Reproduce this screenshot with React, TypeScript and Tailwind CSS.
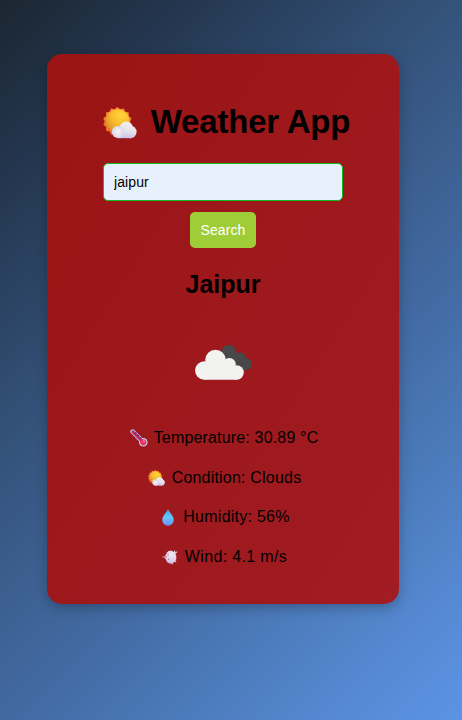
import React from 'react';

const RAYS = Array.from({ length: 28 }, (_, i) => {
  const r = i % 2 === 0 ? 14.5 : 12.6;
  const a = (i * Math.PI) / 14 - Math.PI / 2;
  return `${(14.4 + r * Math.cos(a)).toFixed(2)},${(14.6 + r * Math.sin(a)).toFixed(2)}`;
}).join(' ');

function SunCloud({ className, id }: { className: string; id: string }) {
  return (
    <svg className={className} viewBox="0 0 34 32">
      <defs>
        <radialGradient id={id + 's'} cx="0.65" cy="0.25" r="0.8">
          <stop offset="0" stopColor="#ffd43a" />
          <stop offset="0.5" stopColor="#f9bd2d" />
          <stop offset="1" stopColor="#d9922a" />
        </radialGradient>
        <linearGradient id={id + 'r'} x1="0" y1="0" x2="0" y2="1">
          <stop offset="0" stopColor="#ff922d" />
          <stop offset="1" stopColor="#ed6426" />
        </linearGradient>
        <linearGradient id={id + 'c'} gradientUnits="userSpaceOnUse" x1="22" y1="14" x2="20" y2="31">
          <stop offset="0" stopColor="#f0eef1" />
          <stop offset="0.6" stopColor="#e4e1ea" />
          <stop offset="1" stopColor="#c9bfe8" />
        </linearGradient>
        <radialGradient id={id + 'l'} cx="0.5" cy="0.5" r="0.5">
          <stop offset="0" stopColor="#f8f6fa" />
          <stop offset="1" stopColor="#d9d5e2" />
        </radialGradient>
      </defs>
      <polygon fill={`url(#${id}r)`} points={RAYS} />
      <circle cx="14.8" cy="14" r="11.6" fill={`url(#${id}s)`} />
      <g fill={`url(#${id}c)`}>
        <circle cx="23.3" cy="21.6" r="7" />
        <circle cx="27.4" cy="25" r="6.200" />
        <rect x="14" y="24" width="14" height="7.200" />
      </g>
      <circle cx="15" cy="24.900" r="6.200" fill={`url(#${id}l)`} />
    </svg>
  );
}

function Thermometer() {
  return (
    <svg className="h-[18px] w-[18px] shrink-0" viewBox="0 0 18 18">
      <path d="M2.700 2.700L12.500 12.500" stroke="#b5d5f5" strokeWidth="4.600" strokeLinecap="round" />
      <circle cx="13.300" cy="13.300" r="4.300" fill="#b5d5f5" />
      <path d="M2.900 2.900L12 12" stroke="#c22a68" strokeWidth="3" strokeLinecap="round" />
      <path d="M5 4.200L6.500 3.800M7.300 6.600L9 6.100M9.700 9L11.400 8.500" stroke="#4b2a66" strokeWidth="1.300" />
      <circle cx="13.300" cy="13.300" r="3.100" fill="#f52d5b" />
      <circle cx="14" cy="12.300" r="1.200" fill="#ff6b84" />
    </svg>
  );
}

function Drop() {
  return (
    <svg className="h-[17px] w-[12px] shrink-0" viewBox="0 0 12 17">
      <defs>
        <linearGradient id="drop" x1="0.5" y1="0" x2="0.5" y2="1">
          <stop offset="0" stopColor="#3fa9ef" />
          <stop offset="0.5" stopColor="#64c6fa" />
          <stop offset="1" stopColor="#6c8cf5" />
        </linearGradient>
      </defs>
      <path fill="url(#drop)" d="M6 .3C7.500 3.500 11.700 7 11.700 11c0 3.400-2.500 5.700-5.700 5.700S.3 14.400.3 11C.3 7 4.500 3.500 6 .3z" />
    </svg>
  );
}

function WindFace() {
  return (
    <svg className="h-[15px] w-[16px] shrink-0" viewBox="0 0 16 15">
      <defs>
        <radialGradient id="face" cx="0.65" cy="0.3" r="0.75">
          <stop offset="0" stopColor="#f1e9f2" />
          <stop offset="0.6" stopColor="#dccde2" />
          <stop offset="1" stopColor="#b8b2e6" />
        </radialGradient>
      </defs>
      <path
        fill="url(#face)"
        d="M4.500 3L6.200 1.200 8.500.6l2.300.7 1 .9L12.300.6l1 .2-.1 1.700L15 1.300l.4.8-2 2 .9 2v3l-.8 1.800 1 .6-.4.8-1.800-.4-1.500 1.300.4 1.100-1.500-.1-.3-.7H7.500l-1.900-1-1.200-1.400L4 9.500 2.800 8.800 3.500 8 0 6.900l3.500-1L3 5.100l1.200-.5z"
      />
      <path d="M2.500 6.900h2.300M5.500 4.700l1.200.3M6 9.300l1 .2" stroke="#a04a68" strokeWidth="0.800" />
    </svg>
  );
}

function Clouds() {
  return (
    <svg className="h-[36px] w-[60px]" viewBox="0 0 60 36">
      <g fill="#484849">
        <circle cx="34.700" cy="8.800" r="7.700" />
        <circle cx="46.500" cy="13.700" r="5.300" />
        <circle cx="52" cy="20.300" r="6" />
        <path d="M34 9l8-1 4 3 6 9v6.300h-7L30 20z" />
      </g>
      <g fill="#f2f2f0">
        <circle cx="10.300" cy="26.500" r="9.300" />
        <circle cx="21.500" cy="16" r="10.300" />
        <circle cx="35.300" cy="20.300" r="6.400" />
        <circle cx="42.500" cy="28.500" r="7.300" />
        <path d="M10 20l12-6 13 4 6 5 2 12.800H10.300z" />
      </g>
    </svg>
  );
}

function Row({ icon, text, className }: { icon: React.ReactNode; text: string; className: string }) {
  return (
    <p className={'flex h-5 items-center justify-center text-[16px] leading-5 whitespace-pre ' + className}>
      {icon}
      <span>{text}</span>
    </p>
  );
}

export default function App() {
  return (
    <main className="flex h-[720px] w-[462px] items-start bg-[linear-gradient(135deg,#1b2631_0%,#22334a_13%,#34537b_39%,#41689f_60%,#4d7dbe_78%,#5588d1_88%,#5b94e5_100%)] pt-[54px] pl-[47px] font-['Liberation_Sans',Arial,sans-serif] text-black">
      <section className="flex h-[550px] w-[352px] flex-col items-center rounded-[15px] bg-linear-to-br from-[#9a1414] to-[#a11c23] pt-[46px] shadow-[0_4px_12px_rgba(0,0,0,0.25)]">
        <h1 className="ml-[7px] flex h-11 items-center gap-[14px] text-[33px] leading-[44px] font-bold tracking-[-0.2px] whitespace-nowrap">
          <SunCloud id="title" className="mt-[2px] h-[32px] w-[34px]" />
          <span>Weather App</span>
        </h1>
        <input
          className="mt-[19px] h-[38px] w-[240px] rounded-[5px] border border-[#12ba22] bg-[#e8f0fe] px-[10px] text-[14px] tracking-[0.1px] outline-none"
          defaultValue="jaipur"
        />
        <button className="mt-[11px] h-[36px] w-[66px] rounded-[5px] bg-[#9fcd38] text-[14px] tracking-[0.1px] text-white">Search</button>
        <h2 className="mt-[21px] h-[30px] text-[25px] leading-[30px] font-bold">Jaipur</h2>
        <div className="mt-[45px] ml-[2px]">
          <Clouds />
        </div>
        <Row className="mt-[48px] ml-[2px] gap-[6px] tracking-[0.17px]" icon={<Thermometer />} text="Temperature: 30.89 °C" />
        <Row className="mt-[20px] ml-[3px] gap-[7px] tracking-[0.2px]" icon={<SunCloud id="condition" className="h-[16px] w-[17px]" />} text="Condition: Clouds" />
        <Row className="mt-[19px] ml-[6px] gap-[9px] tracking-[0.25px]" icon={<Drop />} text="Humidity: 56%" />
        <Row className="mt-[20px] ml-[3px] gap-[7px] tracking-[0.35px]" icon={<WindFace />} text="Wind: 4.1 m/s" />
      </section>
    </main>
  );
}
